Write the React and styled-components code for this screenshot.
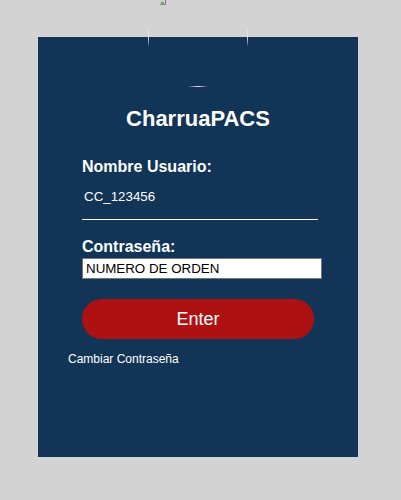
import React from 'react'
import styled, { createGlobalStyle } from 'styled-components';

const GlobalStyle = createGlobalStyle`
    html, body {
        margin: 0;
        background: #d3d3d3;
        font-family: "Liberation Sans", Arial, sans-serif;
    }
`;

const Login = () => {
    return (
        <Page>
            <GlobalStyle />
            <LogoTrace width="401" height="100" viewBox="0 0 401 100">
                <defs>
                    <linearGradient id="vfade" x1="0" y1="0" x2="0" y2="1">
                        <stop offset="0" stopColor="#ffffff" stopOpacity="0" />
                        <stop offset="0.55" stopColor="#e6e6e6" stopOpacity="0.9" />
                        <stop offset="1" stopColor="#ffffff" stopOpacity="0" />
                    </linearGradient>
                    <linearGradient id="hfade" x1="0" y1="0" x2="1" y2="0">
                        <stop offset="0" stopColor="#ffffff" stopOpacity="0" />
                        <stop offset="0.5" stopColor="#e8e4dc" stopOpacity="1" />
                        <stop offset="1" stopColor="#ffffff" stopOpacity="0" />
                    </linearGradient>
                </defs>
                <rect x="159" y="0" width="7" height="5" fill="#cfcfcf" />
                <rect x="161" y="2" width="3" height="2" fill="#6fae5a" />
                <rect x="165" y="0" width="1" height="5" fill="#7a7a7a" />
                <rect x="160" y="4" width="6" height="1" fill="#8a8a8a" />
                <rect x="148" y="27" width="1" height="20" fill="url(#vfade)" />
                <rect x="247" y="27" width="1" height="20" fill="url(#vfade)" />
                <rect x="188" y="86" width="20" height="1" fill="url(#hfade)" />
            </LogoTrace>
            <Card>
                <LogoSpace />
                <Title>CharruaPACS</Title>
                <Form>
                    <Label>Nombre Usuario:</Label>
                    <UserInput type='text' defaultValue='CC_123456' />
                    <Label spaced>Contraseña:</Label>
                    <PassInput type='text' defaultValue='NUMERO DE ORDEN' />
                    <Button>Enter</Button>
                </Form>
                <ChangeLink>Cambiar Contraseña</ChangeLink>
            </Card>
        </Page>
    )
}

const Page = styled.div`
    position: relative;
    padding-top: 37px;
    padding-left: 38px;
    height: 500px;
    box-sizing: border-box;
`;

const LogoTrace = styled.svg`
    position: absolute;
    top: 0;
    left: 0;
    pointer-events: none;
    z-index: 2;
`;

const Card = styled.div`
    width: 320px;
    height: 420px;
    background: #123456;
    display: flex;
    flex-direction: column;
`;

const LogoSpace = styled.div`
    height: 69px;
`;

const Title = styled.h2`
    margin: 0;
    color: #ffffff;
    font-size: 22px;
    line-height: 26px;
    font-weight: bold;
    text-align: center;
`;

const Form = styled.div`
    display: flex;
    flex-direction: column;
    align-items: flex-start;
    padding-left: 44px;
    margin-top: 26px;
`;

const Label = styled.label`
    color: #ffffff;
    font-size: 16px;
    line-height: 18px;
    font-weight: bold;
    margin-top: ${props => props.spaced ? '18px' : '0'};
`;

const UserInput = styled.input`
    width: 236px;
    box-sizing: border-box;
    background: transparent;
    border: none;
    border-bottom: 1px solid #ffffff;
    color: #ffffff;
    font-family: "Liberation Sans", Arial, sans-serif;
    font-size: 13.33px;
    line-height: 16px;
    padding: 13px 2px 14px 2px;
    outline: none;
`;

const PassInput = styled.input`
    width: 240px;
    height: 21px;
    box-sizing: border-box;
    margin-top: 2px;
    background: #ffffff;
    border: 1px solid #767676;
    color: #000000;
    font-family: "Liberation Sans", Arial, sans-serif;
    font-size: 13.33px;
    padding: 1px 3px;
    outline: none;
`;

const Button = styled.button`
    width: 232px;
    height: 40px;
    margin-top: 20px;
    border: none;
    border-radius: 20px;
    background: #ae1111;
    color: #ffffff;
    font-family: "Liberation Sans", Arial, sans-serif;
    font-size: 18px;
    cursor: pointer;
`;

const ChangeLink = styled.div`
    margin-top: 13px;
    margin-left: 30px;
    color: #ffffff;
    font-size: 12px;
    line-height: 14px;
    cursor: pointer;
`;

export default Login;
